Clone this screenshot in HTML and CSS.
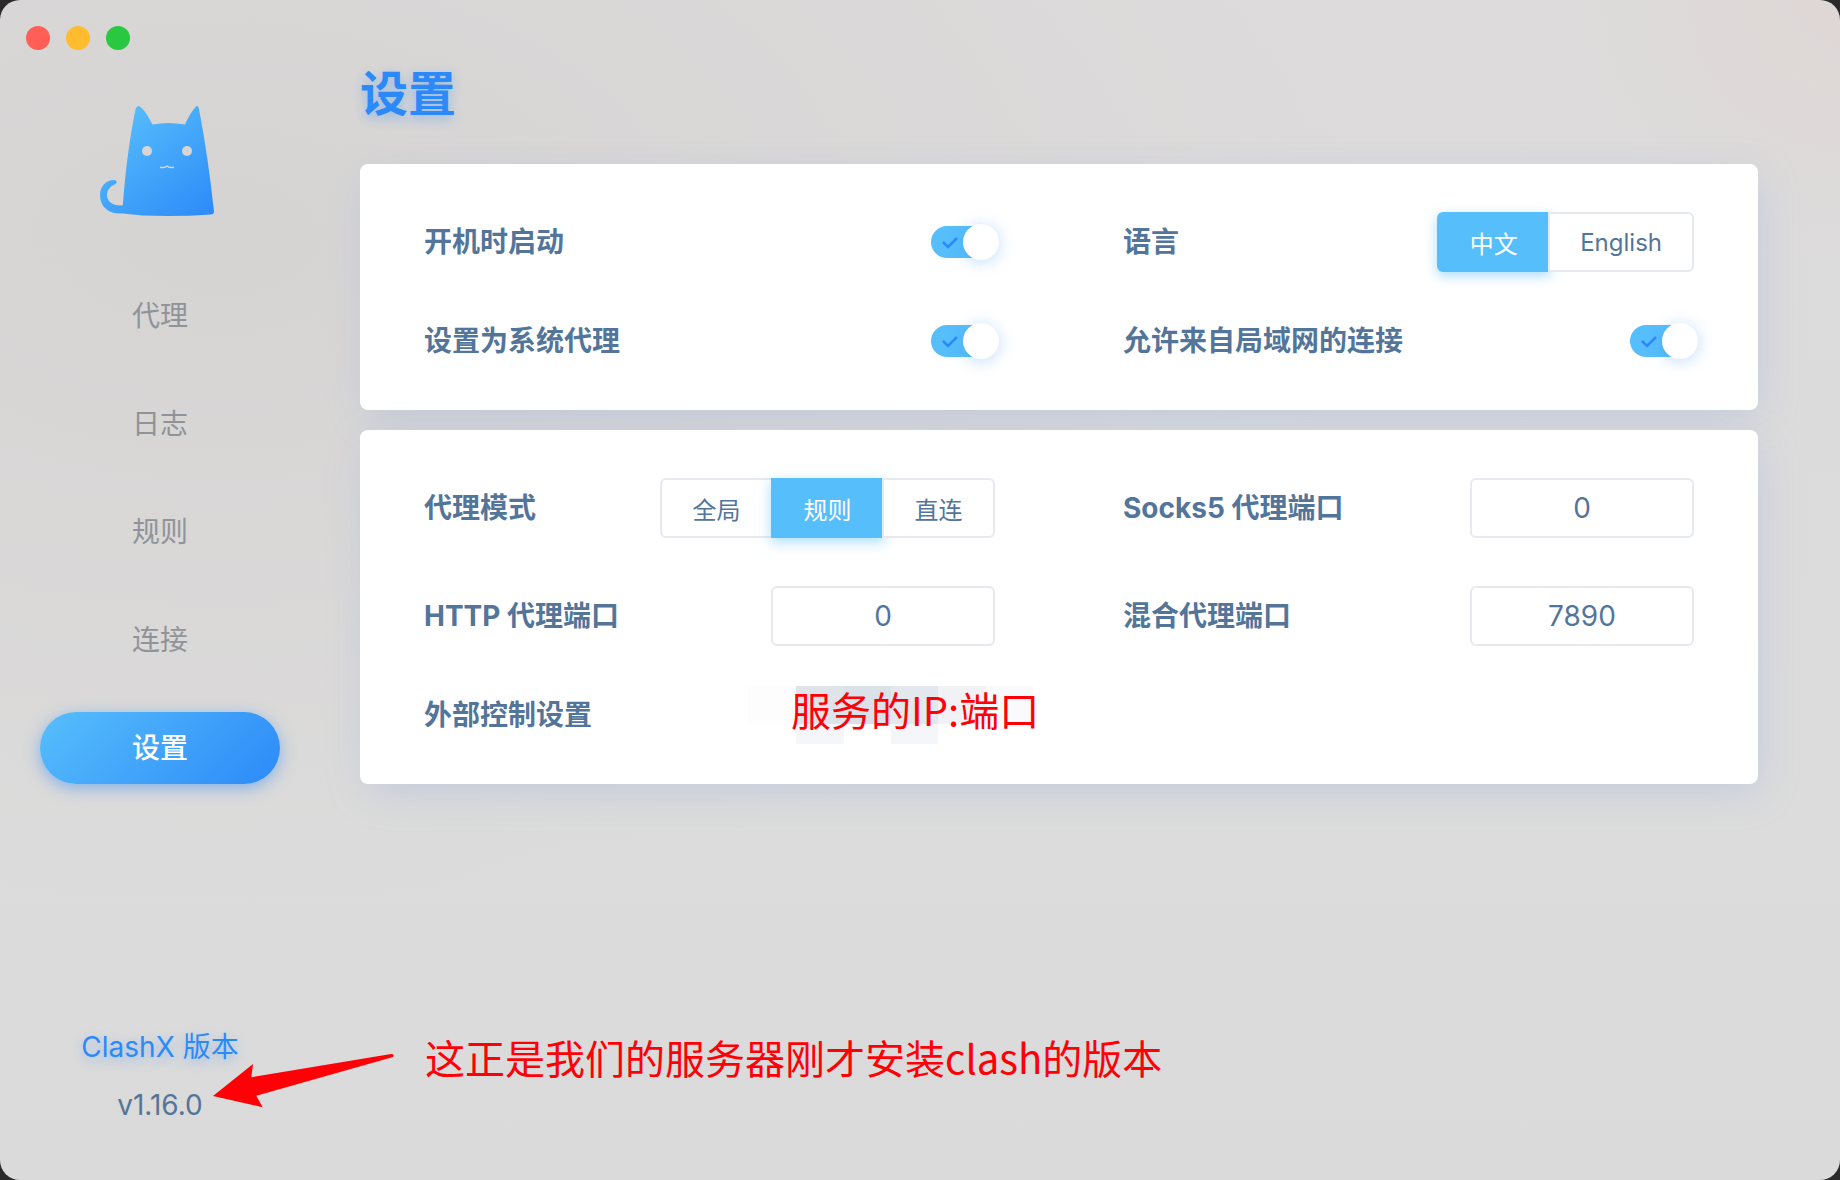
FILE: index.html
```
<!DOCTYPE html>
<html lang="zh-CN">

<head>
    <meta charset="UTF-8">
    <meta name="viewport" content="width=device-width, initial-scale=1.0">
    <title>ClashX</title>
    <link rel="stylesheet" href="styles.css">
</head>

<body>
    <div class="window">
        <aside class="sidebar">
            <div class="traffic">
                <button class="dot close" aria-label="关闭"></button>
                <button class="dot minimize" aria-label="最小化"></button>
                <button class="dot maximize" aria-label="最大化"></button>
            </div>

            <svg class="logo" viewBox="0 0 160 140" aria-hidden="true">
                <defs>
                    <linearGradient id="cat" x1="0.2" y1="0" x2="1" y2="1">
                        <stop offset="0" stop-color="#57befc"/>
                        <stop offset="1" stop-color="#2c8af8"/>
                    </linearGradient>
                    <mask id="face">
                        <rect width="160" height="140" fill="#fff"/>
                        <circle cx="67" cy="61" r="5"/>
                        <circle cx="107" cy="61" r="5"/>
                        <path d="M80 77.200Q85 78.200 87 76Q89 78.200 94 77.200" fill="none" stroke="#000" stroke-width="1.4"/>
                    </mask>
                </defs>
                <path mask="url(#face)" fill="url(#cat)" d="M55.500 19.500Q57 14.500 60 16.500Q66 21.500 72.500 34.600Q88 31.600 105 34.600Q110 23 116 16.500Q118.200 14.800 119 19Q128 66 134 121.500Q134.200 124 131 124.500Q110 126 88 126Q60 126 43 123.500C30 124.500 20 118 20 105C20 96 27 89.500 34 90C37.500 90.500 37.500 93.300 34.500 94.600C29 97.500 27 101 27 105C27 112 33 116 42.800 115.300Q47 60 55.500 19.500Z"/>
            </svg>

            <nav class="menu">
                <a class="item" href="#proxies">代理</a>
                <a class="item" href="#logs">日志</a>
                <a class="item" href="#rules">规则</a>
                <a class="item" href="#connections">连接</a>
                <a class="item active" href="#settings">设置</a>
            </nav>

            <div class="version">
                <span class="version-label">ClashX 版本</span>
                <span class="version-number">v1.16.0</span>
            </div>
        </aside>

        <main class="page">
            <h1>设置</h1>

            <section class="card">
                <div class="row">
                    <label class="label" for="startup">开机时启动</label>
                    <span class="switch">
                        <input type="checkbox" id="startup" checked>
                        <svg class="check" viewBox="0 0 18 14"><path d="M2 7l5 5 9-9"/></svg>
                    </span>
                </div>
                <div class="row">
                    <span class="label">语言</span>
                    <div class="buttons">
                        <button class="option selected">中文</button>
                        <button class="option">English</button>
                    </div>
                </div>
                <div class="row">
                    <label class="label" for="system">设置为系统代理</label>
                    <span class="switch">
                        <input type="checkbox" id="system" checked>
                        <svg class="check" viewBox="0 0 18 14"><path d="M2 7l5 5 9-9"/></svg>
                    </span>
                </div>
                <div class="row">
                    <label class="label" for="lan">允许来自局域网的连接</label>
                    <span class="switch">
                        <input type="checkbox" id="lan" checked>
                        <svg class="check" viewBox="0 0 18 14"><path d="M2 7l5 5 9-9"/></svg>
                    </span>
                </div>
            </section>

            <section class="card">
                <div class="row">
                    <span class="label">代理模式</span>
                    <div class="buttons">
                        <button class="option">全局</button>
                        <button class="option selected">规则</button>
                        <button class="option">直连</button>
                    </div>
                </div>
                <div class="row">
                    <label class="label" for="socks">Socks5 代理端口</label>
                    <input class="port" id="socks" value="0">
                </div>
                <div class="row">
                    <label class="label" for="http">HTTP 代理端口</label>
                    <input class="port" id="http" value="0">
                </div>
                <div class="row">
                    <label class="label" for="mixed">混合代理端口</label>
                    <input class="port" id="mixed" value="7890">
                </div>
                <div class="row">
                    <span class="label">外部控制设置</span>
                    <div class="controller">
                        <svg class="mosaic" viewBox="0 0 285 58" aria-hidden="true">
                            <path fill="#fdfdfe" d="M0 0h48v38H0z"/>
                            <path fill="#dfe4eb" d="M48 0h48v38H48z"/>
                            <path fill="#dae1e8" d="M96 0h47v38H96z"/>
                            <path fill="#e3e7ee" d="M143 0h47v38h-47z"/>
                            <path fill="#f0f2f5" d="M190 0h48v38h-48z"/>
                            <path fill="#f9fafb" d="M238 0h47v38h-47z"/>
                            <path fill="#f4f6f9" d="M48 38h48v20H48zM143 38h47v20h-47z"/>
                        </svg>
                        <span class="note">服务的IP:端口</span>
                    </div>
                </div>
            </section>
        </main>

        <div class="annotation">
            <svg class="arrow" viewBox="0 0 182 54" aria-hidden="true">
                <path fill="#ff0007" d="M0 42L40 10L38.300 23.300L178 0Q182 0 180 3L43.300 41.700L49.700 53.300Z"/>
            </svg>
            <span class="note">这正是我们的服务器刚才安装clash的版本</span>
        </div>
    </div>
</body>

</html>
```

FILE: styles.css
```
* {
    box-sizing: border-box;
}

body {
    margin: 0;
    background: #2a2a2a;
    font-family: Inter, "Noto Sans CJK SC", sans-serif;
    font-size: 28px;
    line-height: 42px;
    color: #54759a;
}

button, input {
    font-family: inherit;
    color: inherit;
}

.window {
    position: relative;
    display: flex;
    min-height: 100vh;
    border-radius: 20px;
    background:
        radial-gradient(circle at 100% 0, #dfd7d6, rgba(223, 215, 214, 0) 260px),
        radial-gradient(ellipse at 12% 20%, #d6d4d3, rgba(214, 212, 211, 0) 50%),
        linear-gradient(#dddbdb, #dcdcdc 70%, #dadada);
}

/* Sidebar */
.sidebar {
    display: flex;
    flex-direction: column;
    align-items: center;
    width: 320px;
    padding-bottom: 54px;
}

.traffic {
    display: flex;
    gap: 16px;
    align-self: flex-start;
    padding: 26px;
}

.dot {
    width: 24px;
    height: 24px;
    padding: 0;
    border: none;
    border-radius: 50%;
}

.close {
    background: #ff5f57;
}

.minimize {
    background: #febc2e;
}

.maximize {
    background: #28c840;
}

.logo {
    width: 160px;
    height: 140px;
    margin-top: 14px;
}

.menu {
    display: flex;
    flex-direction: column;
    gap: 36px;
    margin-top: 50px;
}

.item {
    width: 240px;
    line-height: 72px;
    border-radius: 36px;
    text-align: center;
    text-decoration: none;
    color: #909399;
}

.active {
    color: #fff;
    font-weight: 500;
    background: linear-gradient(135deg, #57befc, #2c8af8);
    box-shadow: 0 4px 16px rgba(44, 138, 248, 0.5);
}

.version {
    display: flex;
    flex-direction: column;
    gap: 16px;
    margin-top: auto;
    text-align: center;
}

.version-label {
    color: #2c8af8;
    text-shadow: 0 4px 12px rgba(44, 138, 248, 0.4);
}

/* Settings */
.page {
    flex: 1;
    padding: 58px 82px 80px 40px;
}

h1 {
    margin: 0 0 34px;
    font-size: 48px;
    line-height: 72px;
    font-weight: bold;
    color: #2c8af8;
    text-shadow: 0 4px 12px rgba(44, 138, 248, 0.4);
}

.card {
    display: grid;
    grid-template-columns: 1fr 1fr;
    margin-bottom: 20px;
    padding: 24px 0;
    border-radius: 8px;
    background: #fff;
    box-shadow: 4px 10px 40px -6px rgba(150, 175, 225, 0.4);
}

.row {
    display: flex;
    align-items: center;
    justify-content: space-between;
    padding: 24px 64px;
}

.label {
    font-weight: bold;
}

.switch {
    position: relative;
    width: 64px;
    height: 32px;
}

.switch input {
    appearance: none;
    display: block;
    width: 64px;
    height: 32px;
    margin: 0;
    border-radius: 16px;
    background: #e5e7eb;
    cursor: pointer;
}

.switch input:checked {
    background: #57befc;
}

.switch input::after { /* knob */
    content: "";
    position: absolute;
    top: -2px;
    right: -4px;
    width: 36px;
    height: 36px;
    border-radius: 50%;
    background: #fff;
    box-shadow: 0 2px 16px rgba(44, 138, 248, 0.3);
}

.check {
    position: absolute;
    top: 9px;
    left: 10px;
    width: 18px;
    height: 14px;
    fill: none;
    stroke: #2c8af8;
    stroke-width: 2.5;
    pointer-events: none;
}

.buttons {
    display: flex;
}

.option {
    position: relative;
    min-width: 113px;
    height: 60px;
    padding: 0 30px;
    border: 2px solid #e6eaef;
    background: #fff;
    font-size: 24px;
    cursor: pointer;
}

.option + .option {
    margin-left: -2px;
}

.option:first-child {
    border-radius: 6px 0 0 6px;
}

.option:last-child {
    border-radius: 0 6px 6px 0;
}

.selected {
    border-color: #57befc;
    background: #57befc;
    color: #fff;
    box-shadow: 0 4px 12px rgba(87, 190, 252, 0.5);
}

.port {
    width: 224px;
    height: 60px;
    border: 2px solid #e6eaef;
    border-radius: 6px;
    background: #fff;
    font-size: 28px;
    text-align: center;
}

.controller {
    position: relative;
    width: 204px;
    height: 42px;
}

.mosaic {
    position: absolute;
    top: -8px;
    left: -43px;
    width: 285px;
    height: 58px;
}

.controller .note {
    position: absolute;
    top: -6px;
    left: 0;
}

/* Red notes */
.note {
    font-family: "Noto Sans CJK SC", sans-serif;
    font-size: 40px;
    color: #ff0007;
    white-space: nowrap;
}

.annotation {
    position: absolute;
    left: 213px;
    bottom: 72px;
    display: flex;
    align-items: flex-start;
    gap: 30px;
}

.arrow {
    width: 182px;
    height: 54px;
    margin-top: 18px;
}
```
